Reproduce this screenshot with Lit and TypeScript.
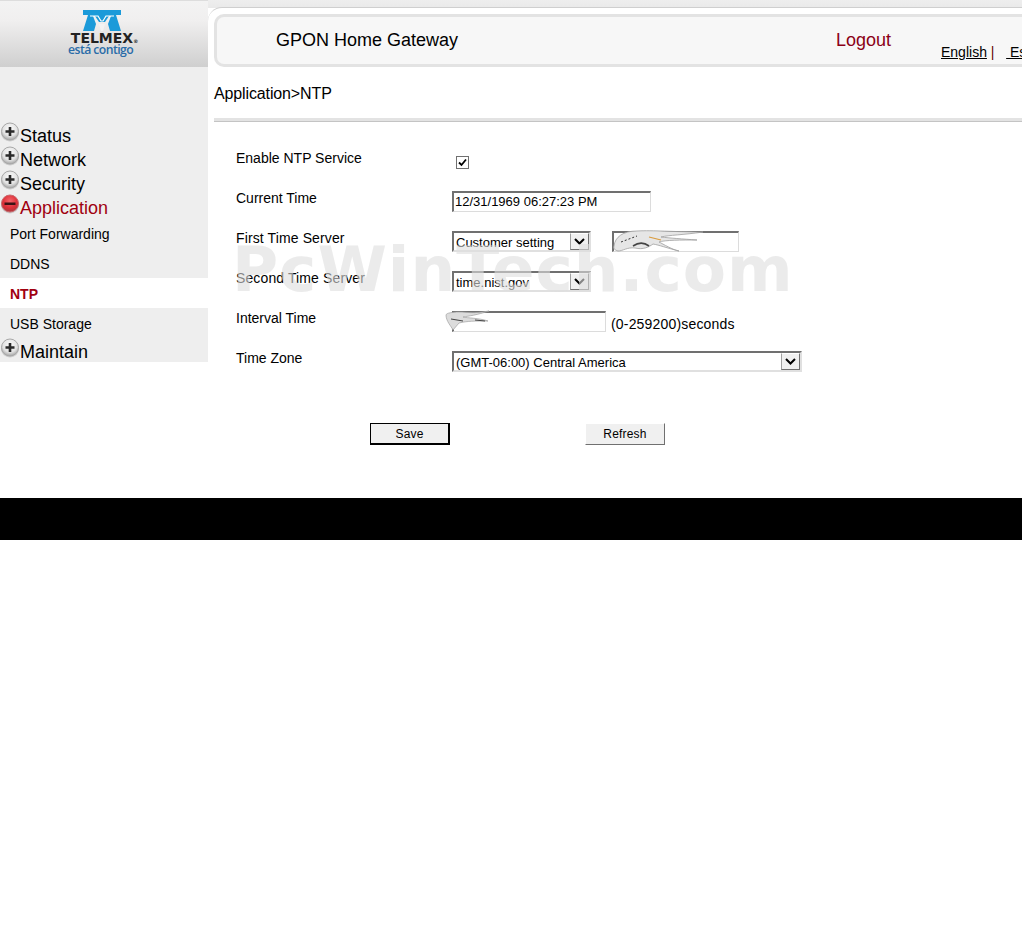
import { LitElement, html, css, svg } from "lit";
import { customElement } from "lit/decorators.js";

const plus = (red: boolean) => {
  const id = red ? "gr" : "gg";
  return html`<svg class="ico" width="20" height="20" viewBox="0 0 20 20">
    <defs>
      <radialGradient id=${id} cx="50%" cy="35%" r="65%">
        <stop offset="0" stop-color=${red ? "#f4646a" : "#fbfbfb"}></stop>
        <stop offset="0.65" stop-color=${red ? "#dd2f38" : "#e2e2e2"}></stop>
        <stop offset="1" stop-color=${red ? "#a83a40" : "#a3a3a3"}></stop>
      </radialGradient>
    </defs>
    <ellipse cx="10" cy="11" rx="9" ry="8.5" fill="#b5b5b5" opacity=".6"></ellipse>
    <circle cx="10" cy="9.5" r="8.5" fill="url(#${id})" stroke=${red ? "#c8686c" : "#a8a8a8"} stroke-width="1"></circle>
    ${red
      ? svg`<rect x="4.5" y="8.5" width="11" height="2.5" fill="#3a1416"></rect>`
      : svg`<path d="M8.7 5h2.6v3.2h3.2v2.6h-3.2v3.2h-2.6v-3.2h-3.2v-2.6h3.2z" fill="#2a2a2a"></path>`}
  </svg>`;
};

const arrow = html`<span class="arrow"><svg width="11" height="7" viewBox="0 0 11 7"><path d="M1 1l4.5 4.5L10 1" fill="none" stroke="#000" stroke-width="2"></path></svg></span>`;

@customElement("app-root")
export class AppRoot extends LitElement {
  static styles = css`
    :host {
      display: block;
      position: relative;
      width: 1022px;
      height: 935px;
      overflow: hidden;
      background: #fff;
      font-family: "Liberation Sans", Arial, sans-serif;
      color: #000;
    }
    .top { display: flex; height: 498px; }
    .side { width: 208px; flex: none; display: flex; flex-direction: column; height: 362px; background: #eee; }
    .logo {
      height: 67px;
      flex: none;
      box-sizing: border-box;
      padding-top: 9px;
      display: flex;
      flex-direction: column;
      align-items: center;
      background: linear-gradient(#f3f3f3, #f0efef 30%, #cfcfcf);
      border-top: 1px solid #ddd;
    }
    .logo svg { display: block; margin-left: -4px; }
    .brand {
      font-family: "DejaVu Sans", sans-serif;
      font-size: 14px;
      line-height: 11px;
      font-weight: 700;
      color: #222;
      margin-top: 2px;
      margin-left: 1px;
      white-space: nowrap;
    }
    .brand sup { font-size: 5px; line-height: 0; vertical-align: 0; }
    .slogan {
      font-family: "Open Sans", sans-serif;
      font-size: 13px;
      line-height: 11px;
      font-weight: 600;
      letter-spacing: -0.6px;
      color: #2a6ca8;
      margin-left: -7px;
      transform: scaleX(0.94);
      white-space: nowrap;
    }
    .menu { padding-top: 55px; }
    .big {
      height: 24px;
      display: flex;
      font-size: 18px;
      line-height: 29px;
    }
    .big.on { color: #a00010; }
    .ico { flex: none; }
    .sub { height: 30px; line-height: 33px; font-size: 14px; padding-left: 10px; }
    .sub.on { background: #fff; color: #a00010; font-weight: 700; }

    .main {
      flex: 1;
      min-width: 0;
      background: linear-gradient(#eee, #e9e9e9 8px, #fff 8px);
      overflow: hidden;
    }
    .panel {
      margin-top: 7px;
      height: 491px;
      background: #fff;
      border-top: 1px solid #cfcfcf;
      border-top-left-radius: 14px;
      box-sizing: border-box;
      padding: 6px 0 0 6px;
    }
    .head {
      box-sizing: border-box;
      width: 860px;
      height: 53px;
      border: 3px solid #e3e3e3;
      border-right: none;
      border-radius: 10px 0 0 10px;
      background: #f7f7f7;
      display: flex;
      position: relative;
    }
    .title { font-size: 18px; line-height: 46px; margin-left: 59px; width: 560px; flex: none; white-space: nowrap; }
    .logout { font-size: 18px; line-height: 46px; color: #8b0016; width: 105px; flex: none; }
    .langs { font-size: 14px; line-height: 16px; padding-top: 27px; white-space: nowrap; color: #600; }
    .langs u { color: #000; }
    .crumb { font-size: 16px; line-height: 18px; margin: 18px 0 0 0; letter-spacing: -0.13px; }
    .rule { height: 2px; margin-top: 15px; background: #e3e3e3; border-bottom: 1px solid #c4c4c4; border-top: 1px solid #e3e3e3; }
    .form {
      display: grid;
      grid-template-columns: 216px 1fr;
      grid-auto-rows: 40px;
      margin: 28px 0 0 22px;
      font-size: 14px;
    }
    .lab { line-height: 16px; }
    .lab.wide { letter-spacing: 0.12px; }
    .ctl { display: flex; align-items: flex-start; padding-top: 1px; position: relative; }
    .check {
      box-sizing: border-box;
      width: 13px;
      height: 13px;
      margin: 5px 0 0 4px;
      background: #fff;
      border: 1px solid #707070;
      display: flex;
      align-items: center;
      justify-content: center;
    }
    .field, .select {
      box-sizing: border-box;
      height: 21px;
      background: #fff;
      border-style: solid;
      border-width: 2px 1px 1px 2px;
      border-color: #707070 #dcdcdc #dcdcdc #707070;
      font-size: 13px;
      line-height: 18px;
      white-space: nowrap;
    }
    .field { padding-left: 1px; }
    .select {
      display: flex;
      justify-content: space-between;
      padding-left: 2px;
      border-width: 2px;
      border-color: #707070 #e0e0e0 #e0e0e0 #707070;
      line-height: 19px;
    }
    .arrow {
      box-sizing: border-box;
      width: 19px;
      height: 17px;
      display: flex;
      align-items: center;
      justify-content: center;
      background: #f0f0f0;
      border: 1px solid #707070;
      border-top-color: #fff;
      border-left-color: #a0a0a0;
    }
    .note { margin: 5px 0 0 5px; line-height: 16px; letter-spacing: 0.18px; }
    .smudge { position: absolute; pointer-events: none; }
    .s1 { left: 161px; top: 0; }
    .s2 { left: -7px; top: 0; }
    .btns { display: flex; margin: 33px 0 0 156px; gap: 135px; }
    .btn {
      box-sizing: border-box;
      width: 80px;
      height: 22px;
      font-size: 12px;
      line-height: 20px;
      letter-spacing: 0.2px;
      text-align: center;
      background: #f0f0f0;
      border: 1px solid #fff;
      border-right-color: #707070;
      border-bottom-color: #707070;
    }
    .btn.def { border: 1px solid #000; border-right-width: 2px; border-bottom-width: 2px; }
    .foot { height: 42px; background: #000; }
    .mark {
      position: absolute;
      left: 232px;
      top: 233px;
      font-family: "DejaVu Sans", sans-serif;
      font-size: 63px;
      line-height: 74px;
      font-weight: 700;
      letter-spacing: 0.95px;
      color: rgba(222, 222, 222, 0.6);
      white-space: nowrap;
      pointer-events: none;
    }
  `;

  render() {
    return html`
      <div class="top">
        <aside class="side">
          <div class="logo">
            <svg width="38" height="21" viewBox="0 0 38 21">
              <path d="M0 0H38V5H33L38 21H27L25 14L28 6H26L22 12H16L12 6H10L13 14L11 21H0L5 5H0Z" fill="#1b9ad9"></path>
              <path d="M7 6H15L18 11H20L23 6H31" fill="none" stroke="#fff" stroke-width="1.2"></path>
              <path d="M16 14H22L20 21H18Z" fill="#f3f3f3"></path>
            </svg>
            <div class="brand">TELMEX<sup>®</sup></div>
            <div class="slogan">está contigo</div>
          </div>
          <nav class="menu">
            <div class="big">${plus(false)}Status</div>
            <div class="big">${plus(false)}Network</div>
            <div class="big">${plus(false)}Security</div>
            <div class="big on">${plus(true)}Application</div>
            <div class="sub">Port Forwarding</div>
            <div class="sub">DDNS</div>
            <div class="sub on">NTP</div>
            <div class="sub">USB Storage</div>
            <div class="big">${plus(false)}Maintain</div>
          </nav>
        </aside>
        <main class="main">
          <div class="panel">
            <div class="head">
              <div class="title">GPON Home Gateway</div>
              <div class="logout">Logout</div>
              <div class="langs"><u>English</u> |&nbsp;&nbsp;&nbsp;<u>&nbsp;Español</u></div>
            </div>
            <div class="crumb">Application&gt;NTP</div>
            <div class="rule"></div>
            <div class="form">
              <div class="lab">Enable NTP Service</div>
              <div class="ctl"><span class="check"><svg width="11" height="11" viewBox="0 0 11 11"><path d="M2 5.5l2.5 2.5L9 2.5" fill="none" stroke="#000" stroke-width="1.8"></path></svg></span></div>
              <div class="lab">Current Time</div>
              <div class="ctl"><div class="field" style="width:199px">12/31/1969 06:27:23 PM</div></div>
              <div class="lab wide">First Time Server</div>
              <div class="ctl">
                <div class="select" style="width:139px">Customer setting${arrow}</div>
                <div class="field" style="width:127px;margin-left:21px"></div>
                <svg class="smudge s1" width="90" height="24" viewBox="0 0 90 24">
                  <path d="M1 16C2 7 10 1 24 1 40 0 60 2 90 2 70 5 56 5 48 7 56 8 70 9 84 10 68 10 52 10 46 12 50 14 60 20 66 21 54 18 46 15 40 14 36 17 30 20 22 18 14 17 10 21 5 21 2 20 0 19 1 16Z" fill="#e6e6e6" stroke="#a0a0a0" stroke-width=".8"></path>
                  <path d="M8 12L24 6" stroke="#333" stroke-width="1" stroke-dasharray="2 2" fill="none"></path>
                  <path d="M20 16C26 12 32 13 36 16" stroke="#444" stroke-width="1.6" fill="none"></path>
                  <path d="M36 7L48 10" stroke="#d99a3c" stroke-width="1.2"></path>
                </svg>
              </div>
              <div class="lab wide">Second Time Server</div>
              <div class="ctl"><div class="select" style="width:139px">time.nist.gov${arrow}</div></div>
              <div class="lab">Interval Time</div>
              <div class="ctl">
                <div class="field" style="width:154px"></div>
                <span class="note">(0-259200)seconds</span>
                <svg class="smudge s2" width="50" height="24" viewBox="0 0 50 24">
                  <path d="M1 5C1 3 8 2 14 2 22 2 28 4 44 1 32 5 24 6 18 7 22 8 34 8 43 11 30 11 22 11 14 13L8 20C6 16 1 11 1 5Z" fill="#dcdcdc" stroke="#a0a0a0" stroke-width=".7"></path>
                  <path d="M6 9L18 11M30 10L40 11" stroke="#444" stroke-width="1" fill="none"></path>
                </svg>
              </div>
              <div class="lab">Time Zone</div>
              <div class="ctl"><div class="select" style="width:350px">(GMT-06:00) Central America${arrow}</div></div>
            </div>
            <div class="btns">
              <div class="btn def">Save</div>
              <div class="btn">Refresh</div>
            </div>
          </div>
        </main>
      </div>
      <div class="foot"></div>
      <div class="mark">PcWinTech.com</div>
    `;
  }
}
